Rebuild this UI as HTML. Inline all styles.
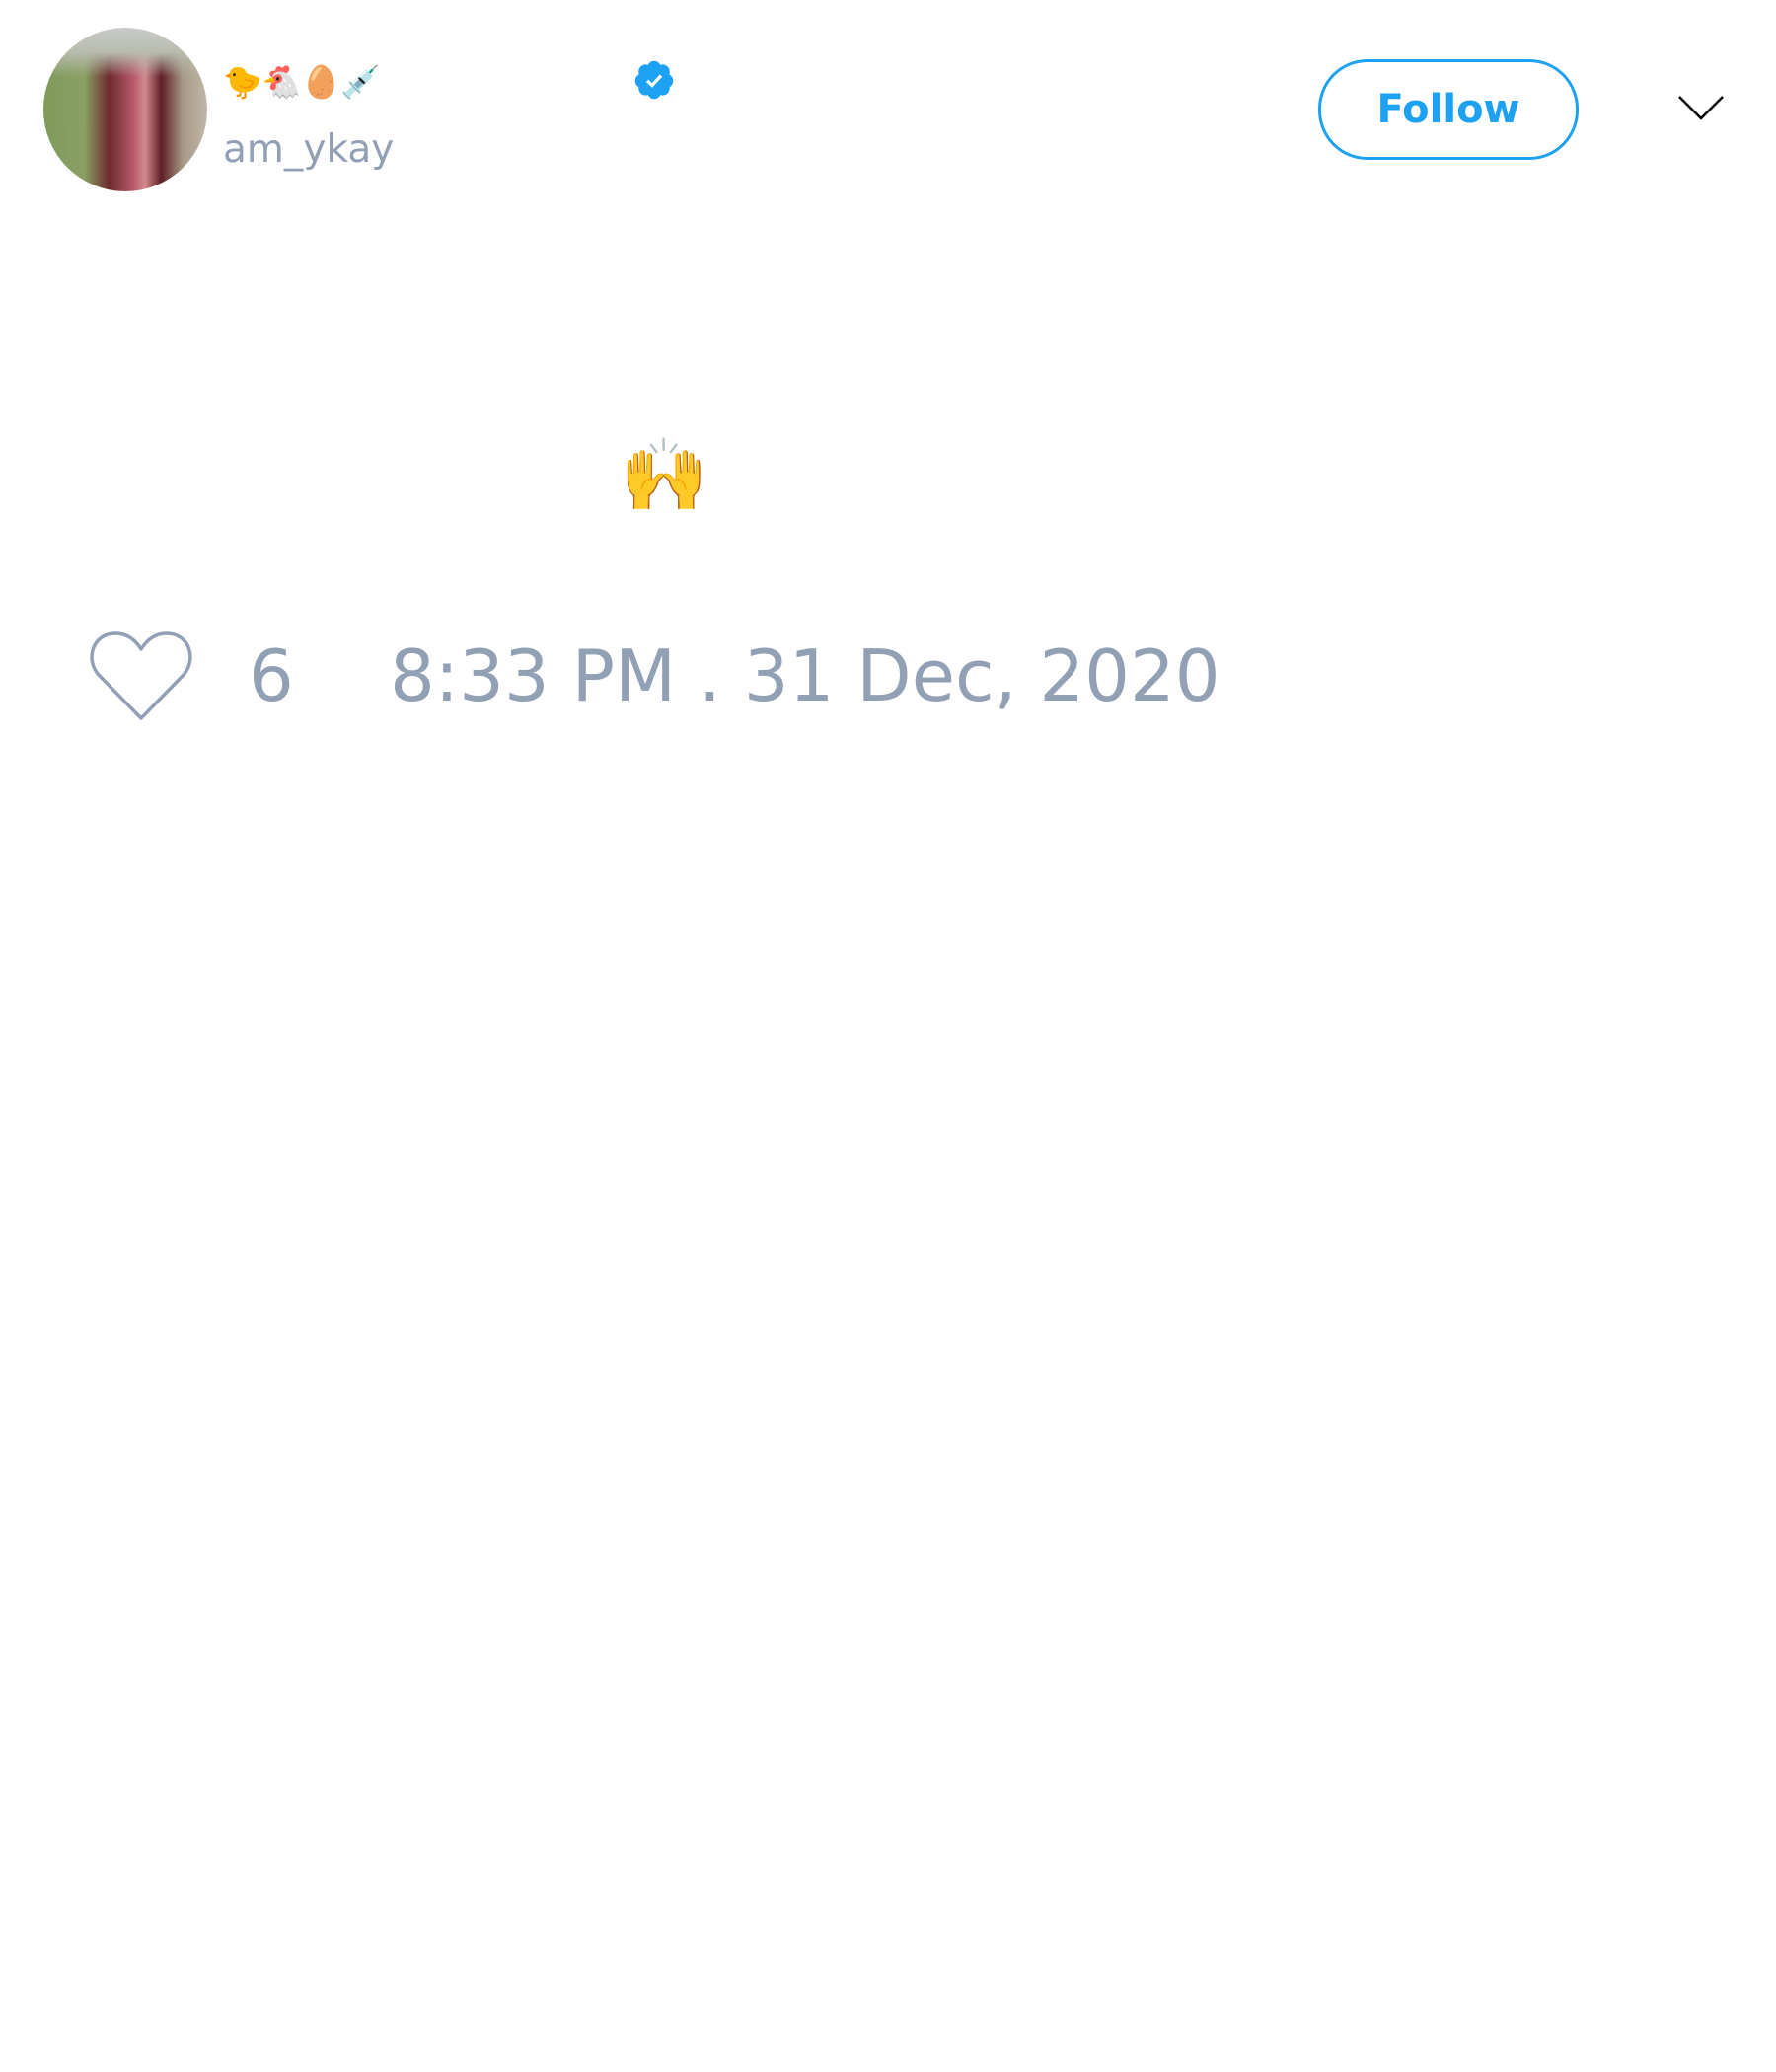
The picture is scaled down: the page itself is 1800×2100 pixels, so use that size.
<!DOCTYPE html>
<html><head><meta charset="utf-8"><style>
html,body{margin:0;padding:0;background:#fff;width:1800px;height:2100px;overflow:hidden;font-family:"DejaVu Sans","Liberation Sans",sans-serif;}
.abs{position:absolute}
.avatar{left:44px;top:28px;width:166px;height:166px;border-radius:50%;overflow:hidden;
background:linear-gradient(180deg,#c9ccc8 0%,#b8bcae 15%,transparent 30%),linear-gradient(90deg,#7f9a5a 0%,#8aa064 25%,#6d2a2e 40%,#b85a6a 55%,#d08a8e 62%,#5e1e24 72%,#a59a86 85%,#c2b8a8 100%);}
.gray{color:#92a0b6}
</style></head><body>
<div class="abs avatar"></div>
<div class="abs" style="left:226px;top:62px;font-size:32px;line-height:42px;font-family:'Noto Color Emoji','DejaVu Sans',sans-serif;">🐤🐔🥚💉</div>
<svg class="abs" style="left:641px;top:58px" width="44" height="46" viewBox="0 0 24 24"><path fill="#1da1f2" d="M22.5 12.5c0-1.58-.875-2.950-2.148-3.6.154-.435.238-.905.238-1.4 0-2.21-1.710-3.998-3.818-3.998-.47 0-.92.084-1.336.25C14.818 2.415 13.510 1.5 12 1.5s-2.816.917-3.437 2.25c-.415-.165-.866-.25-1.336-.25-2.110 0-3.818 1.790-3.818 4 0 .494.083.964.237 1.4-1.272.65-2.147 2.018-2.147 3.600 0 1.495.782 2.798 1.942 3.486-.02.17-.032.34-.032.514 0 2.210 1.708 4 3.818 4 .47 0 .92-.086 1.335-.25.62 1.334 1.926 2.250 3.437 2.250 1.512 0 2.818-.916 3.437-2.250.415.163.865.248 1.336.248 2.110 0 3.818-1.790 3.818-4 0-.174-.012-.344-.033-.513 1.158-.687 1.943-1.990 1.943-3.484z"/><path fill="none" stroke="#fff" stroke-width="1.8" d="M8.2 12.4l2.6 2.6 5-5.4"/></svg>
<div class="abs gray" style="left:226px;top:127px;font-size:39px;line-height:50px;">am_ykay</div>
<div class="abs" style="left:1336px;top:60px;width:258px;height:96px;border:3px solid #1da1f2;border-radius:50px;color:#1da1f2;font-weight:bold;font-size:40px;line-height:96px;text-align:center;">Follow</div>
<svg class="abs" style="left:1700px;top:94px" width="48" height="32" viewBox="0 0 48 32"><path d="M2 4 L24 26 L46 4" fill="none" stroke="#000" stroke-width="2.5"/></svg>
<div class="abs" style="left:628px;top:436px;font-size:72px;line-height:92px;font-family:'Noto Color Emoji','DejaVu Sans',sans-serif;">🙌</div>
<svg class="abs" style="left:90px;top:638px" width="106" height="94" viewBox="0 0 106 94"><path d="M53 90 L10 46 C-4 30 4 4 27 4 C40 4 48 12 53 20 C58 12 66 4 79 4 C102 4 110 30 96 46 Z" fill="none" stroke="#92a0b6" stroke-width="3.5" stroke-linejoin="round"/></svg>
<div class="abs gray" style="left:252px;top:640px;font-size:72px;line-height:90px;">6</div>
<div class="abs gray" style="left:395px;top:640px;font-size:72px;line-height:90px;white-space:nowrap;">8:33 PM . 31 Dec, 2020</div>
</body></html>
